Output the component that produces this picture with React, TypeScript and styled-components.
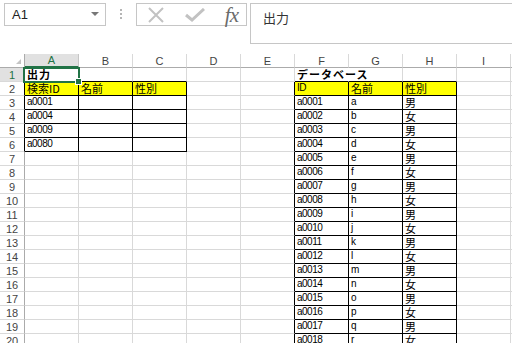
import React from 'react';
import styled, { createGlobalStyle } from 'styled-components';

const GRID = '#d9d9d9';
const HEAD = '#ababab';
const GREEN = '#217346';
const INK = '#000';

const Global = createGlobalStyle`
	body {
		margin: 0;
		background: #fff;
		font-family: 'Liberation Sans', 'Noto Sans CJK JP', sans-serif;
	}
`;

const Page = styled.div`
	width: 512px;
	height: 343px;
	overflow: hidden;
	background: #fff;
`;

const TopBar = styled.div`
	display: flex;
	align-items: flex-start;
	height: 54px;
	padding-top: 3px;
	box-sizing: border-box;
`;

const NameBox = styled.div`
	display: flex;
	align-items: center;
	justify-content: space-between;
	margin-left: 4px;
	width: 102px;
	height: 23px;
	padding: 0 6px 0 7px;
	box-sizing: border-box;
	border: 1px solid #c6c6c6;
	font-size: 13px;
	color: #222;
`;

const Arrow = styled.div`
	width: 0;
	height: 0;
	border-left: 4px solid transparent;
	border-right: 4px solid transparent;
	border-top: 4px solid #777;
	margin-top: -1px;
`;

const Grip = styled.div`
	display: flex;
	flex-direction: column;
	gap: 2px;
	width: 30px;
	align-items: center;
	padding-top: 6px;
`;

const Dot = styled.span`
	width: 2px;
	height: 2px;
	background: #b5b5b5;
`;

const FxBox = styled.div`
	display: flex;
	align-items: center;
	justify-content: space-between;
	width: 111px;
	height: 23px;
	padding: 0 8px 0 10px;
	box-sizing: border-box;
	border: 1px solid #c6c6c6;
`;

const Fx = styled.span`
	font-family: 'Liberation Serif', serif;
	font-style: italic;
	font-size: 21px;
	line-height: 20px;
	color: #6b6b6b;
	letter-spacing: -1px;
`;

const FormulaBar = styled.div`
	flex: 1;
	margin-left: 3px;
	height: 41px;
	padding: 4px 0 0 12px;
	box-sizing: border-box;
	border: 1px solid #c6c6c6;
	border-right: none;
	font-family: 'Noto Sans CJK JP', sans-serif;
	font-size: 13px;
	color: #333;
`;

const Sheet = styled.div`
	display: grid;
	grid-template-columns: 25px repeat(9, 54px) 1fr;
	grid-auto-rows: 14px;
`;

const Corner = styled.div`
	position: relative;
	border-right: 1px solid ${HEAD};
	border-bottom: 1px solid ${HEAD};
	&::after {
		content: '';
		position: absolute;
		right: 3px;
		bottom: 3px;
		border-left: 5px solid transparent;
		border-bottom: 5px solid #c4c4c4;
	}
`;

const ColHead = styled.div<{ $sel?: boolean }>`
	display: flex;
	align-items: center;
	justify-content: center;
	box-sizing: border-box;
	font-size: 11px;
	color: ${(p) => (p.$sel ? GREEN : '#444')};
	background: ${(p) => (p.$sel ? '#e1e1e1' : '#fff')};
	border-right: 1px solid ${(p) => (p.$sel ? '#c6c6c6' : GRID)};
	border-bottom: ${(p) => (p.$sel ? `2px solid ${GREEN}` : `1px solid ${HEAD}`)};
`;

const RowHead = styled.div<{ $sel?: boolean; $edge: string }>`
	display: flex;
	align-items: center;
	justify-content: center;
	box-sizing: border-box;
	font-size: 11px;
	color: ${(p) => (p.$sel ? GREEN : '#444')};
	background: ${(p) => (p.$sel ? '#e1e1e1' : '#fff')};
	border-right: 1px solid ${(p) => p.$edge};
	border-bottom: 1px solid ${GRID};
`;

const Cell = styled.div<{ $right: string; $bottom: string; $fill?: string }>`
	position: relative;
	display: flex;
	align-items: flex-end;
	box-sizing: border-box;
	padding: 0 0 1px 2px;
	white-space: nowrap;
	background: ${(p) => p.$fill || 'transparent'};
	border-right: 1px solid ${(p) => p.$right};
	border-bottom: 1px solid ${(p) => p.$bottom};
`;

const Text = styled.span<{ $jp?: boolean; $bold?: boolean }>`
	position: relative;
	z-index: 1;
	font-family: ${(p) => (p.$jp ? "'Noto Sans CJK JP', sans-serif" : "'Liberation Sans', sans-serif")};
	font-size: ${(p) => (p.$jp ? '11px' : '10px')};
	line-height: 12px;
	letter-spacing: ${(p) => (p.$bold ? '1px' : p.$jp ? '0' : '-0.5px')};
	font-weight: ${(p) => (p.$bold ? 700 : 400)};
	color: #000;
`;

const Selection = styled.div`
	position: absolute;
	left: -2px;
	right: -2px;
	top: -1px;
	bottom: -2px;
	border: 2px solid ${GREEN};
	z-index: 3;
	pointer-events: none;
	&::after {
		content: '';
		position: absolute;
		right: -4px;
		bottom: -4px;
		width: 5px;
		height: 5px;
		background: ${GREEN};
		border: 1px solid #fff;
	}
`;

const COLS = ['A', 'B', 'C', 'D', 'E', 'F', 'G', 'H', 'I'];
const ROWS = 20;

const cells: Record<string, string> = {
	A1: '出力',
	A2: '検索ID',
	B2: '名前',
	C2: '性別',
	A3: 'a0001',
	A4: 'a0004',
	A5: 'a0009',
	A6: 'a0080',
	F1: 'データベース',
	F2: 'ID',
	G2: '名前',
	H2: '性別',
};
for (let i = 1; i <= 18; i++) {
	const r = i + 2;
	cells[`F${r}`] = `a${String(i).padStart(4, '0')}`;
	cells[`G${r}`] = String.fromCharCode(96 + i);
	cells[`H${r}`] = i % 2 ? '男' : '女';
}

const inTable = (r: number, c: number) =>
	(r >= 2 && r <= 6 && c >= 1 && c <= 3) || (r >= 2 && c >= 6 && c <= 8);

const App = () => {
	const grid: React.ReactNode[] = [];
	grid.push(<Corner key="corner" />);
	COLS.forEach((c, i) => grid.push(<ColHead key={c} $sel={i === 0}>{c}</ColHead>));
	grid.push(<ColHead key="rest" />);

	for (let r = 1; r <= ROWS; r++) {
		grid.push(
			<RowHead key={`h${r}`} $sel={r === 1} $edge={r === 1 ? GREEN : inTable(r, 1) ? INK : HEAD}>
				{r}
			</RowHead>
		);
		for (let c = 1; c <= 10; c++) {
			const ref = c <= 9 ? `${COLS[c - 1]}${r}` : '';
			const value = cells[ref];
			let right = inTable(r, c) || inTable(r, c + 1) ? INK : GRID;
			if (ref === 'F1') right = 'transparent';
			const bottom = inTable(r, c) || inTable(r + 1, c) ? INK : GRID;
			const jp = value ? /[^\x00-\x7f]/.test(value) : false;
			grid.push(
				<Cell key={`${r}-${c}`} $right={right} $bottom={bottom} $fill={r === 2 && inTable(r, c) ? '#ffff00' : undefined}>
					{value && (
						<Text $jp={jp} $bold={r === 1}>
							{value}
						</Text>
					)}
					{ref === 'A1' && <Selection />}
				</Cell>
			);
		}
	}

	return (
		<Page>
			<Global />
			<TopBar>
				<NameBox>
					<span>A1</span>
					<Arrow />
				</NameBox>
				<Grip>
					<Dot />
					<Dot />
					<Dot />
				</Grip>
				<FxBox>
					<svg width="18" height="16" viewBox="0 0 18 16">
						<path d="M2 1 L16 15 M16 1 L2 15" stroke="#c2c2c2" strokeWidth="2" fill="none" />
					</svg>
					<svg width="20" height="14" viewBox="0 0 20 14">
						<path d="M1 7 L7 12 L19 1" stroke="#c2c2c2" strokeWidth="3" fill="none" />
					</svg>
					<Fx>fx</Fx>
				</FxBox>
				<FormulaBar>出力</FormulaBar>
			</TopBar>
			<Sheet>{grid}</Sheet>
		</Page>
	);
};

export default App;
